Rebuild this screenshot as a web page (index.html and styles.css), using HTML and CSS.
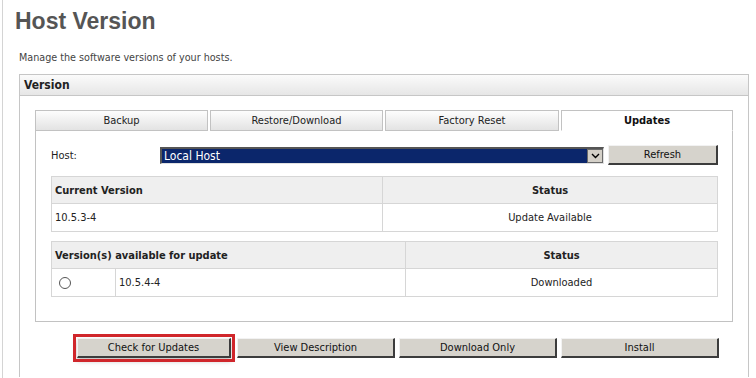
FILE: index.html
```html
<!DOCTYPE html>
<html lang="en">
<head>
    <meta charset="UTF-8">
    <meta name="viewport" content="width=device-width, initial-scale=1.0">
    <title>Host Version</title>
    <link rel="stylesheet" href="styles.css">
</head>
<body>

    <div class="page">
        <h1 class="title">Host Version</h1>
        <p class="intro">Manage the software versions of your hosts.</p>

        <div class="panel">
            <div class="panel-head">Version</div>
            <div class="panel-body">

                <div class="tabbox">
                    <div class="tabs">
                        <div class="tab">Backup</div>
                        <div class="tab">Restore/Download</div>
                        <div class="tab">Factory Reset</div>
                        <div class="tab active">Updates</div>
                    </div>

                    <div class="tab-content">
                        <div class="host-row">
                            <span class="host-label">Host:</span>
                            <div class="select">
                                <span class="select-value">Local Host</span>
                                <span class="select-arrow">
                                    <svg width="9" height="6" viewBox="0 0 9 6"><path d="M1 1 L4.5 4.5 L8 1" fill="none" stroke="#000" stroke-width="1.4"/></svg>
                                </span>
                            </div>
                            <button class="btn btn-refresh">Refresh</button>
                        </div>

                        <table class="grid">
                            <thead>
                                <tr>
                                    <th class="col-left">Current Version</th>
                                    <th class="center">Status</th>
                                </tr>
                            </thead>
                            <tbody>
                                <tr>
                                    <td class="col-left">10.5.3-4</td>
                                    <td class="center">Update Available</td>
                                </tr>
                            </tbody>
                        </table>

                        <table class="grid grid-avail">
                            <thead>
                                <tr>
                                    <th colspan="2">Version(s) available for update</th>
                                    <th class="center">Status</th>
                                </tr>
                            </thead>
                            <tbody>
                                <tr>
                                    <td class="col-radio"><span class="radio"></span></td>
                                    <td class="col-version">10.5.4-4</td>
                                    <td class="center">Downloaded</td>
                                </tr>
                            </tbody>
                        </table>
                    </div>
                </div>

                <!-- action buttons under the tab box -->
                <div class="actions">
                    <button class="btn btn-action highlight">Check for Updates</button>
                    <button class="btn btn-action">View Description</button>
                    <button class="btn btn-action">Download Only</button>
                    <button class="btn btn-action">Install</button>
                </div>

            </div>
        </div>
    </div>

</body>
</html>
```

FILE: styles.css
```css
/* General styling */
body {
    margin: 0;
    padding: 0;
    background: #ffffff;
    font-family: "DejaVu Sans Condensed", "DejaVu Sans", sans-serif;
    font-size: 11px;
    color: #222;
    overflow: hidden;
}

.page {
    margin-left: 2px;
    border-left: 1px solid #d4d4d4;
    height: 378px;
    overflow: hidden;
    padding: 0 8px 0 12px;
}

.title {
    margin: 0;
    padding-top: 7px;
    font-family: "Liberation Sans", Arial, sans-serif;
    font-size: 23px;
    line-height: 28px;
    font-weight: bold;
    color: #555555;
}

.intro {
    margin: 16px 0 0 4px;
    line-height: 14px;
    font-size: 10.7px;
    color: #444;
}

/* Version panel, runs past the bottom of the view */
.panel {
    margin: 9px 0 0 4px;
    width: 728px;
    height: 302px;
    border: 1px solid #c6c6c6;
    border-bottom: none;
}

.panel-head {
    height: 20px;
    line-height: 20px;
    padding-left: 4px;
    background: linear-gradient(#fbfbfb, #e6e6e6);
    border-bottom: 1px solid #c6c6c6;
    font-size: 12px;
    font-weight: bold;
    color: #222;
}

.panel-body {
    padding: 14px 15px 0 15px;
}

/* Tabs */
.tabs {
    display: grid;
    grid-template-columns: 173px 173px 174px 1fr;
    column-gap: 2px;
}

.tab {
    height: 19px;
    line-height: 19px;
    text-align: center;
    background: linear-gradient(#fdfdfd, #e3e3e3);
    border: 1px solid #c2c2c2;
    color: #222;
}

.tab.active {
    background: #ffffff;
    border-bottom-color: #ffffff;
    font-weight: bold;
    color: #111;
}

.tab-content {
    border: 1px solid #c2c2c2;
    border-top: none;
    padding: 14px 14px 24px 15px;
}

/* Host selector row */
.host-row {
    display: flex;
    align-items: center;
    height: 20px;
}

.host-label {
    width: 109px;
    color: #222;
}

.select {
    display: flex;
    width: 444px;
    height: 17px;
    box-sizing: border-box;
    border-top: 2px solid #555;
    border-left: 2px solid #555;
    border-bottom: 1px solid #e0e0e0;
    border-right: 1px solid #e0e0e0;
    background: #0b266b;
    margin-right: 4px;
}

.select-value {
    flex: 1;
    color: #fff;
    font-size: 12px;
    line-height: 14px;
    padding-left: 2px;
}

.select-arrow {
    width: 16px;
    display: flex;
    align-items: center;
    justify-content: center;
    background: #d4d0c8;
    border: 1px solid #6a6a6a;
    box-sizing: border-box;
}

/* Buttons */
.btn {
    font-family: "DejaVu Sans Condensed", "DejaVu Sans", sans-serif;
    font-size: 11px;
    color: #111;
    background: #d6d3cc;
    border-top: 1px solid #f2f2f2;
    border-left: 1px solid #f2f2f2;
    border-right: 2px solid #3c3c3c;
    border-bottom: 2px solid #3c3c3c;
    padding: 0;
    cursor: pointer;
}

.btn-refresh {
    width: 110px;
    height: 20px;
}

/* Tables */
.grid {
    width: 100%;
    border-collapse: collapse;
    margin-top: 11px;
    border: 1px solid #d6d6d6;
}

.grid + .grid {
    margin-top: 9px;
}

.grid th,
.grid td {
    border: 1px solid #d6d6d6;
    padding: 0 3px;
    text-align: left;
}

.grid th {
    height: 26px;
    background: #efefef;
    font-weight: bold;
    color: #222;
}

.grid td {
    height: 27px;
    color: #222;
}

.grid .center {
    text-align: center;
}

.grid .col-left {
    width: 324px;
}

.grid-avail .col-radio {
    width: 53px;
    padding-left: 7px;
}

.grid-avail .col-version {
    width: 283px;
}

.radio {
    display: inline-block;
    width: 10px;
    height: 10px;
    border: 1px solid #555;
    border-radius: 50%;
    background: #fff;
    vertical-align: middle;
}

/* Action buttons */
.actions {
    display: flex;
    justify-content: flex-end;
    gap: 4px;
    padding: 16px 14px 0 0;
}

.btn-action {
    width: 158px;
    height: 20px;
}

.highlight {
    outline: 3px solid #d0262b;
    outline-offset: 1px;
    box-shadow: 0 3px 5px rgba(0, 0, 0, 0.25);
    width: 154px;
    margin-right: 2px;
}
```
